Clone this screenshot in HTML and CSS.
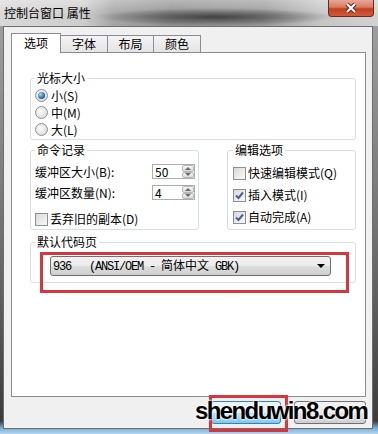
FILE: index.html
```html
<!DOCTYPE html>
<html lang="zh-CN">
<head>
    <meta charset="UTF-8">
    <title>控制台窗口 属性</title>
    <link rel="stylesheet" href="styles.css">
</head>
<body>
    <div class="window">
        <div class="titlebar">
            <span class="title">控制台窗口 属性</span>
            <span class="close">
                <svg width="14" height="10" viewBox="0 0 14 10">
                    <path d="M3 1 L11 9 M11 1 L3 9" stroke="#5a1d12" stroke-width="4"/>
                    <path d="M3 1 L11 9 M11 1 L3 9" stroke="#fff" stroke-width="2.2"/>
                </svg>
            </span>
        </div>
        <div class="client">
            <div class="tabs">
                <span class="tab active">选项</span>
                <span class="tab t2">字体</span>
                <span class="tab t3">布局</span>
                <span class="tab t4">颜色</span>
            </div>
            <div class="panel">
                <fieldset class="group cursor">
                    <legend>光标大小</legend>
                    <div class="opt"><span class="radio checked"></span>小(S)</div>
                    <div class="opt"><span class="radio"></span>中(M)</div>
                    <div class="opt"><span class="radio"></span>大(L)</div>
                </fieldset>
                <div class="group-row">
                    <fieldset class="group history">
                        <legend>命令记录</legend>
                        <div class="field">
                            <span>缓冲区大小(B):</span>
                            <span class="spin"><span class="val">50</span><span class="arrows"><i class="up"></i><i class="down"></i></span></span>
                        </div>
                        <div class="field">
                            <span>缓冲区数量(N):</span>
                            <span class="spin"><span class="val">4</span><span class="arrows"><i class="up"></i><i class="down"></i></span></span>
                        </div>
                        <div class="opt discard"><span class="check"></span>丢弃旧的副本(D)</div>
                    </fieldset>
                    <fieldset class="group edit">
                        <legend>编辑选项</legend>
                        <div class="opt"><span class="check"></span>快速编辑模式(Q)</div>
                        <div class="opt"><span class="check"><svg width="11" height="11" viewBox="0 0 11 11"><path d="M2 5.5 L4.5 8 L9 2.5" fill="none" stroke="#4b5f8f" stroke-width="2"/></svg></span>插入模式(I)</div>
                        <div class="opt"><span class="check"><svg width="11" height="11" viewBox="0 0 11 11"><path d="M2 5.5 L4.5 8 L9 2.5" fill="none" stroke="#4b5f8f" stroke-width="2"/></svg></span>自动完成(A)</div>
                    </fieldset>
                </div>
                <fieldset class="group codepage">
                    <legend>默认代码页</legend>
                    <div class="select">
                        <span class="select-text">936   (ANSI/OEM - <span class="cjk">简体中文</span> GBK)</span>
                        <span class="caret"></span>
                    </div>
                </fieldset>
            </div>
            <div class="buttons">
                <span class="btn ok"></span>
                <span class="btn"></span>
            </div>
        </div>
        <div class="watermark">shenduwin8.com</div>
    </div>
</body>
</html>
```

FILE: styles.css
```css
/* Win7 console properties dialog */
* {
    box-sizing: border-box;
}

body {
    margin: 0;
    font-family: "Noto Sans CJK SC", "Liberation Sans", sans-serif;
    font-size: 12px;
    color: #000;
}

.window {
    position: relative;
    width: 378px;
    height: 434px;
    display: flex;
    flex-direction: column;
    overflow: hidden;
    background: linear-gradient(to bottom, #a4a4a4 0%, #707070 55%, #3c3c3c 97%, #79acd8 98.6%, #b4d6f0 100%);
}

/* blurry aero title bar */
.titlebar {
    height: 26px;
    display: flex;
    justify-content: space-between;
    align-items: flex-start;
    padding-left: 4px;
    background:
        radial-gradient(ellipse 120px 9px at 215px 17px, rgba(45, 45, 45, 0.8), rgba(45, 45, 45, 0)),
        linear-gradient(to bottom, rgba(255, 255, 255, 0.35), rgba(255, 255, 255, 0) 60%),
        linear-gradient(to right, #d8d8d8 0%, #cdcdcd 22%, #a6a6a6 30%, #909090 45%, #9a9a9a 70%, #c6c6c6 85%, #d2d2d2 100%);
}

.title {
    line-height: 26px;
}

.close {
    width: 46px;
    height: 17px;
    margin-right: 4px;
    border: 1px solid #6b2a20;
    border-top: none;
    border-radius: 0 0 4px 4px;
    background: linear-gradient(to bottom, #e9a898 0%, #d87a62 45%, #c2401f 55%, #d45a36 100%);
    display: flex;
    align-items: center;
    justify-content: center;
}

.client {
    flex: 1;
    margin: 0 5px 5px 3px;
    background: #f0f0f0;
    border: 1px solid #6e6e6e;
    padding: 6px 6px 0 7px;
    display: flex;
    flex-direction: column;
}

/* tabs */
.tabs {
    display: flex;
    align-items: flex-end;
    height: 20px;
    position: relative;
    z-index: 1;
}

.tab {
    height: 17px;
    margin-bottom: 1px;
    border: 1px solid #898c95;
    border-bottom: none;
    background: linear-gradient(to bottom, #f4f4f4, #e4e4e4);
    display: flex;
    align-items: center;
    justify-content: center;
    line-height: 14px;
}

.tab.active {
    width: 50px;
    height: 20px;
    margin-bottom: 0;
    background: #fff;
    padding-bottom: 2px;
}

.tab.t2 {
    width: 47px;
    border-left: none;
}

.tab.t3 {
    width: 47px;
    margin-left: -1px;
}

.tab.t4 {
    width: 48px;
    margin-left: -1px;
}

.panel {
    margin-top: -1px;
    height: 345px;
    background: #fff;
    border: 1px solid #898c95;
    padding: 18px 9px 0 18px;
}

/* group boxes */
.group {
    margin: 0;
    min-width: 0;
    border: 1px solid #d5dfe5;
    border-radius: 3px;
}

.group legend {
    padding: 0 2px;
    line-height: 14px;
}

.cursor {
    padding: 2px 4px 1px 4px;
}

.cursor .opt {
    height: 17px;
}

.group-row {
    display: flex;
    gap: 28px;
    margin-top: 3px;
}

.history {
    width: 169px;
    padding: 7px 3px 2px 4px;
}

.edit {
    flex: 1;
    padding: 8px 4px 2px 5px;
}

.edit .opt {
    height: 16px;
    margin-bottom: 6px;
}

.edit .opt:last-child {
    margin-bottom: 0;
}

.opt {
    display: flex;
    align-items: center;
    line-height: 14px;
}

.field {
    display: flex;
    justify-content: space-between;
    align-items: center;
    height: 15px;
    margin-bottom: 6px;
    line-height: 14px;
}

.opt.discard {
    height: 16px;
    margin-top: 11px;
}

/* radios and checkboxes */
.radio {
    width: 13px;
    height: 13px;
    margin-right: 3px;
    border: 1px solid #8e8f8f;
    border-radius: 50%;
    background: radial-gradient(circle at 40% 40%, #fbfbfb, #d2d2d2);
    display: flex;
    align-items: center;
    justify-content: center;
}

.radio.checked::after {
    content: "";
    width: 7px;
    height: 7px;
    border-radius: 50%;
    background: radial-gradient(circle at 35% 35%, #a8dcf4, #2a6a9c 60%, #1a4470);
}

.check {
    width: 13px;
    height: 13px;
    margin-right: 2px;
    border: 1px solid #8e8f8f;
    background: linear-gradient(135deg, #d8d8d8, #fbfbfb);
    display: flex;
    align-items: center;
    justify-content: center;
}

/* spin boxes */
.spin {
    width: 43px;
    height: 15px;
    border: 1px solid #abadb3;
    background: #fff;
    display: flex;
}

.val {
    flex: 1;
    padding-left: 2px;
    line-height: 13px;
}

.arrows {
    width: 12px;
    display: flex;
    flex-direction: column;
}

.arrows i {
    flex: 1;
    border: 1px solid #b8b8b8;
    border-radius: 2px;
    background: linear-gradient(to bottom, #f6f6f6, #dadada);
    display: flex;
    align-items: center;
    justify-content: center;
}

.arrows .up::after {
    content: "";
    border-left: 3px solid transparent;
    border-right: 3px solid transparent;
    border-bottom: 3px solid #6a6a6a;
}

.arrows .down::after {
    content: "";
    border-left: 3px solid transparent;
    border-right: 3px solid transparent;
    border-top: 3px solid #6a6a6a;
}

/* code page combo */
.codepage {
    margin-top: 5px;
    padding: 7px 4px 6px 4px;
}

.select {
    position: relative;
    width: 281px;
    height: 20px;
    margin-left: 15px;
    border: 1px solid #707070;
    border-radius: 3px;
    background: linear-gradient(to bottom, #f2f2f2 0%, #ebebeb 50%, #dddddd 51%, #cfcfcf 100%);
    display: flex;
    justify-content: space-between;
    align-items: center;
    padding: 0 5px 0 2px;
}

.select-text {
    font-family: "Liberation Mono", "Noto Sans CJK SC", monospace;
    letter-spacing: -1.2px;
    white-space: pre;
    line-height: 14px;
}

.select-text .cjk {
    font-family: "Noto Sans CJK SC", sans-serif;
    letter-spacing: 0;
}

.caret {
    border-left: 4px solid transparent;
    border-right: 4px solid transparent;
    border-top: 4px solid #000;
}

/* red annotation around the combo */
.select::after {
    content: "";
    position: absolute;
    left: -11px;
    top: -5px;
    width: 303px;
    height: 35px;
    border: 3px solid #d8363e;
}

/* dialog buttons */
.buttons {
    display: flex;
    justify-content: flex-end;
    gap: 13px;
    margin-top: 4px;
}

.btn {
    position: relative;
    width: 72px;
    height: 23px;
    border: 1px solid #707070;
    border-radius: 3px;
    background: linear-gradient(to bottom, #f2f2f2 0%, #ebebeb 50%, #dddddd 51%, #cfcfcf 100%);
}

.btn.ok {
    width: 70px;
    border-color: #3c7fb1;
    background: linear-gradient(to bottom, #eaf6fd 0%, #d9f0fc 50%, #a9dcf6 51%, #7ccaee 100%);
}

.btn.ok::after {
    content: "";
    position: absolute;
    left: -3px;
    top: -7px;
    width: 73px;
    height: 31px;
    border: 3px solid #d8363e;
}

.watermark {
    position: absolute;
    left: 195px;
    top: 399px;
    font-family: "Liberation Sans", sans-serif;
    font-weight: bold;
    font-size: 24px;
    line-height: 24px;
    letter-spacing: -1.6px;
    color: #000;
    text-shadow: 0 0 2px #fff, 0 0 2px #fff, 0 0 3px #fff;
}
```
